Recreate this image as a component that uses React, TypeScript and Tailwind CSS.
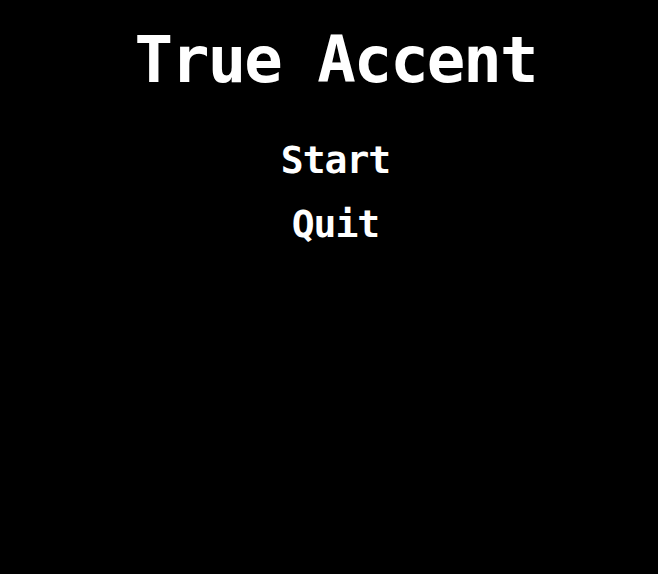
import React from 'react';

const MENU_ITEMS = ['Start', 'Quit'];

const App: React.FC = () => {
  return (
    <div className="w-full h-[574px] bg-white overflow-hidden">
      <div className="relative w-[658px] h-full bg-black">
        <div
          className="w-[671px] flex flex-col items-center text-white pt-[28px]"
          style={{ fontFamily: '"DejaVu Sans Mono", "Liberation Mono", monospace' }}
        >
          <h1 className="text-[64px] leading-none font-bold tracking-[-2px]">True Accent</h1>

          <div className="flex flex-col items-center gap-[26px] mt-[49px]">
            {MENU_ITEMS.map(item => (
              <button
                key={item}
                className="text-[38px] leading-none font-bold tracking-[-1px] bg-transparent border-none text-white cursor-pointer"
              >
                {item}
              </button>
            ))}
          </div>
        </div>
      </div>
    </div>
  );
};

export default App;
